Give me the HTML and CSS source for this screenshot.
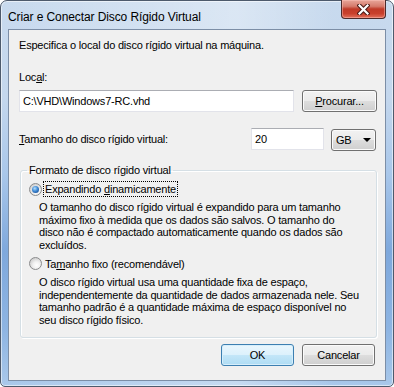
FILE: index.html
```
<!DOCTYPE html>
<html lang="pt">
<head>
<meta charset="utf-8">
<title>Criar e Conectar Disco Rígido Virtual</title>
<link rel="stylesheet" href="styles.css">
</head>
<body>
<div class="window">
  <div class="titlebar">
    <span class="title">Criar e Conectar Disco Rígido Virtual</span>
    <div class="close">
      <svg width="13" height="11" viewBox="0 0 13 11">
        <path d="M2.5 1.5 L10.5 9.5 M10.5 1.5 L2.5 9.5" stroke="#4a1a16" stroke-width="4.2" stroke-linecap="square" fill="none"/>
        <path d="M2.5 1.5 L10.5 9.5 M10.5 1.5 L2.5 9.5" stroke="#ffffff" stroke-width="2.2" stroke-linecap="square" fill="none"/>
      </svg>
    </div>
  </div>
  <div class="client">
    <p class="intro">Especifica o local do disco rígido virtual na máquina.</p>
    <div class="label-local">Loc<u>a</u>l:</div>
    <div class="row path-row">
      <div class="textbox path">C:\VHD\Windows7-RC.vhd</div>
      <div class="btn browse"><u>P</u>rocurar...</div>
    </div>
    <div class="row size-row">
      <span class="size-label"><u>T</u>amanho do disco rígido virtual:</span>
      <div class="textbox num">20</div>
      <div class="btn combo"><span>GB</span><span class="arrow"></span></div>
    </div>
    <fieldset class="group">
      <legend>Formato de disco rígido virtual</legend>
      <div class="option">
        <span class="radio checked"></span>
        <span class="opt-label focus">Expandindo <u>d</u>inamicamente</span>
      </div>
      <p class="desc">O tamanho do disco rígido virtual é expandido para um tamanho<br>máximo fixo à medida que os dados são salvos. O tamanho do<br>disco não é compactado automaticamente quando os dados são<br>excluídos.</p>
      <div class="option">
        <span class="radio"></span>
        <span class="opt-label">Ta<u>m</u>anho fixo (recomendável)</span>
      </div>
      <p class="desc">O disco rígido virtual usa uma quantidade fixa de espaço,<br>independentemente da quantidade de dados armazenada nele. Seu<br>tamanho padrão é a quantidade máxima de espaço disponível no<br>seu disco rígido físico.</p>
    </fieldset>
    <div class="buttons">
      <div class="btn default">OK</div>
      <div class="btn">Cancelar</div>
    </div>
  </div>
</div>
</body>
</html>
```
FILE: styles.css
```
html, body {
  margin: 0;
  padding: 0;
}
body {
  width: 394px;
  height: 387px;
  overflow: hidden;
  background: #ffffff;
  font-family: "Liberation Sans", Arial, sans-serif;
  color: #000;
}
.window {
  position: relative;
  box-sizing: border-box;
  width: 394px;
  height: 387px;
  border: 1px solid #4d5a6c;
  border-radius: 7px 7px 5px 5px;
  background:
    linear-gradient(to right, rgba(255,255,255,0) 0, rgba(255,255,255,0.35) 60%, rgba(255,255,255,0) 85%),
    linear-gradient(to bottom, #c8daee 0, #c4d7ed 25%, #a9c7ea 45%, #7ea8dc 65%, #8db4e2 85%, #a9c8ea 100%);
  box-shadow: inset 0 0 0 1px rgba(255,255,255,0.55);
  display: flex;
  flex-direction: column;
  padding: 0 7px 5px 7px;
}
.titlebar {
  height: 28px;
  flex: none;
  display: flex;
  align-items: center;
}
.title {
  font-size: 12px;
  letter-spacing: -0.1px;
  padding-top: 3px;
  color: #000;
}
.close {
  position: absolute;
  top: -1px;
  right: 7px;
  width: 45px;
  height: 19px;
  box-sizing: border-box;
  border: 1px solid #4b2a2a;
  border-top: none;
  border-radius: 0 0 4px 4px;
  background: linear-gradient(to bottom, #e8a69a 0, #d67b6c 35%, #c03a28 50%, #c8402c 75%, #e2705c 100%);
  box-shadow: inset 0 0 0 1px rgba(255,200,190,0.45);
  display: flex;
  align-items: center;
  justify-content: center;
}
.client {
  flex: 1;
  background: #f0f0f0;
  border: 1px solid #7c8ea6;
  padding: 0 8px 0 10px;
  font-size: 11px;
  letter-spacing: -0.2px;
  line-height: 13px;
  display: flex;
  flex-direction: column;
}
.intro {
  margin: 9px 0 0 0;
}
.label-local {
  margin-top: 19px;
}
.row {
  display: flex;
  align-items: center;
}
.path-row {
  margin-top: 6px;
}
.textbox {
  flex: none;
  box-sizing: border-box;
  background: #fff;
  border: 1px solid #e2e3ea;
  border-top-color: #abadb3;
  height: 22px;
  line-height: 20px;
  padding: 0 3px;
}
.path {
  width: 275px;
}
.btn {
  flex: none;
  box-sizing: border-box;
  height: 22px;
  width: 75px;
  border: 1px solid #707070;
  border-radius: 3px;
  background: linear-gradient(to bottom, #f2f2f2 0, #ebebeb 48%, #dddddd 52%, #cfcfcf 100%);
  box-shadow: inset 0 0 0 1px #fbfbfb;
  text-align: center;
  line-height: 20px;
}
.browse {
  margin-left: 8px;
}
.size-row {
  margin-top: 15px;
}
.size-label {
  flex: 1;
}
.num {
  width: 73px;
}
.combo {
  width: 45px;
  margin-left: 7px;
  margin-right: 1px;
  margin-top: 2px;
  display: flex;
  align-items: center;
  padding-left: 4px;
  text-align: left;
}
.combo .arrow {
  margin-left: 11px;
  width: 0;
  height: 0;
  border-left: 4px solid transparent;
  border-right: 4px solid transparent;
  border-top: 4px solid #000;
}
.group {
  margin: 13px 0 0 1px;
  width: 357px;
  box-sizing: border-box;
  padding: 0 0 10px 0;
  border: 1px solid #d5dfe5;
  border-radius: 3px;
  box-shadow: inset 1px 1px 0 #ffffff, 1px 1px 0 #ffffff;
  min-inline-size: 0;
}
.group legend {
  margin-left: 6px;
  padding: 0 2px;
  line-height: 13px;
}
.option {
  display: flex;
  align-items: center;
  margin-top: 4px;
  height: 16px;
}
.radio {
  position: relative;
  box-sizing: border-box;
  width: 13px;
  height: 13px;
  margin-left: 8px;
  border: 1px solid #8a8b8c;
  border-radius: 50%;
  background: radial-gradient(circle at 60% 65%, #ffffff 0, #f1f1f1 35%, #d0d0d0 75%, #c2c2c2 100%);
}
.radio.checked::after {
  content: "";
  position: absolute;
  left: 2px;
  top: 2px;
  width: 7px;
  height: 7px;
  border-radius: 50%;
  background: radial-gradient(circle at 40% 35%, #b9e0fb 0, #4a93da 40%, #1d5aa6 75%, #123f78 100%);
}
.opt-label {
  margin-left: 1px;
  padding: 1px 1px;
  border: 1px solid transparent;
  line-height: 12px;
}
.opt-label.focus {
  border: 1px dotted #000;
}
.desc {
  margin: 4px 0 0 18px;
  line-height: 12.7px;
  white-space: nowrap;
}
.buttons {
  margin-top: auto;
  margin-bottom: 14px;
  display: flex;
  justify-content: flex-end;
  gap: 8px;
  padding-right: 2px;
}
.buttons .btn {
  width: 73px;
}
.btn.default {
  border-color: #3c7fb1;
  background: linear-gradient(to bottom, #eaf6fd 0, #dcf1fc 48%, #c3e6f8 52%, #aedcf4 100%);
  box-shadow: inset 0 0 0 1px #d6eefb;
}
```
